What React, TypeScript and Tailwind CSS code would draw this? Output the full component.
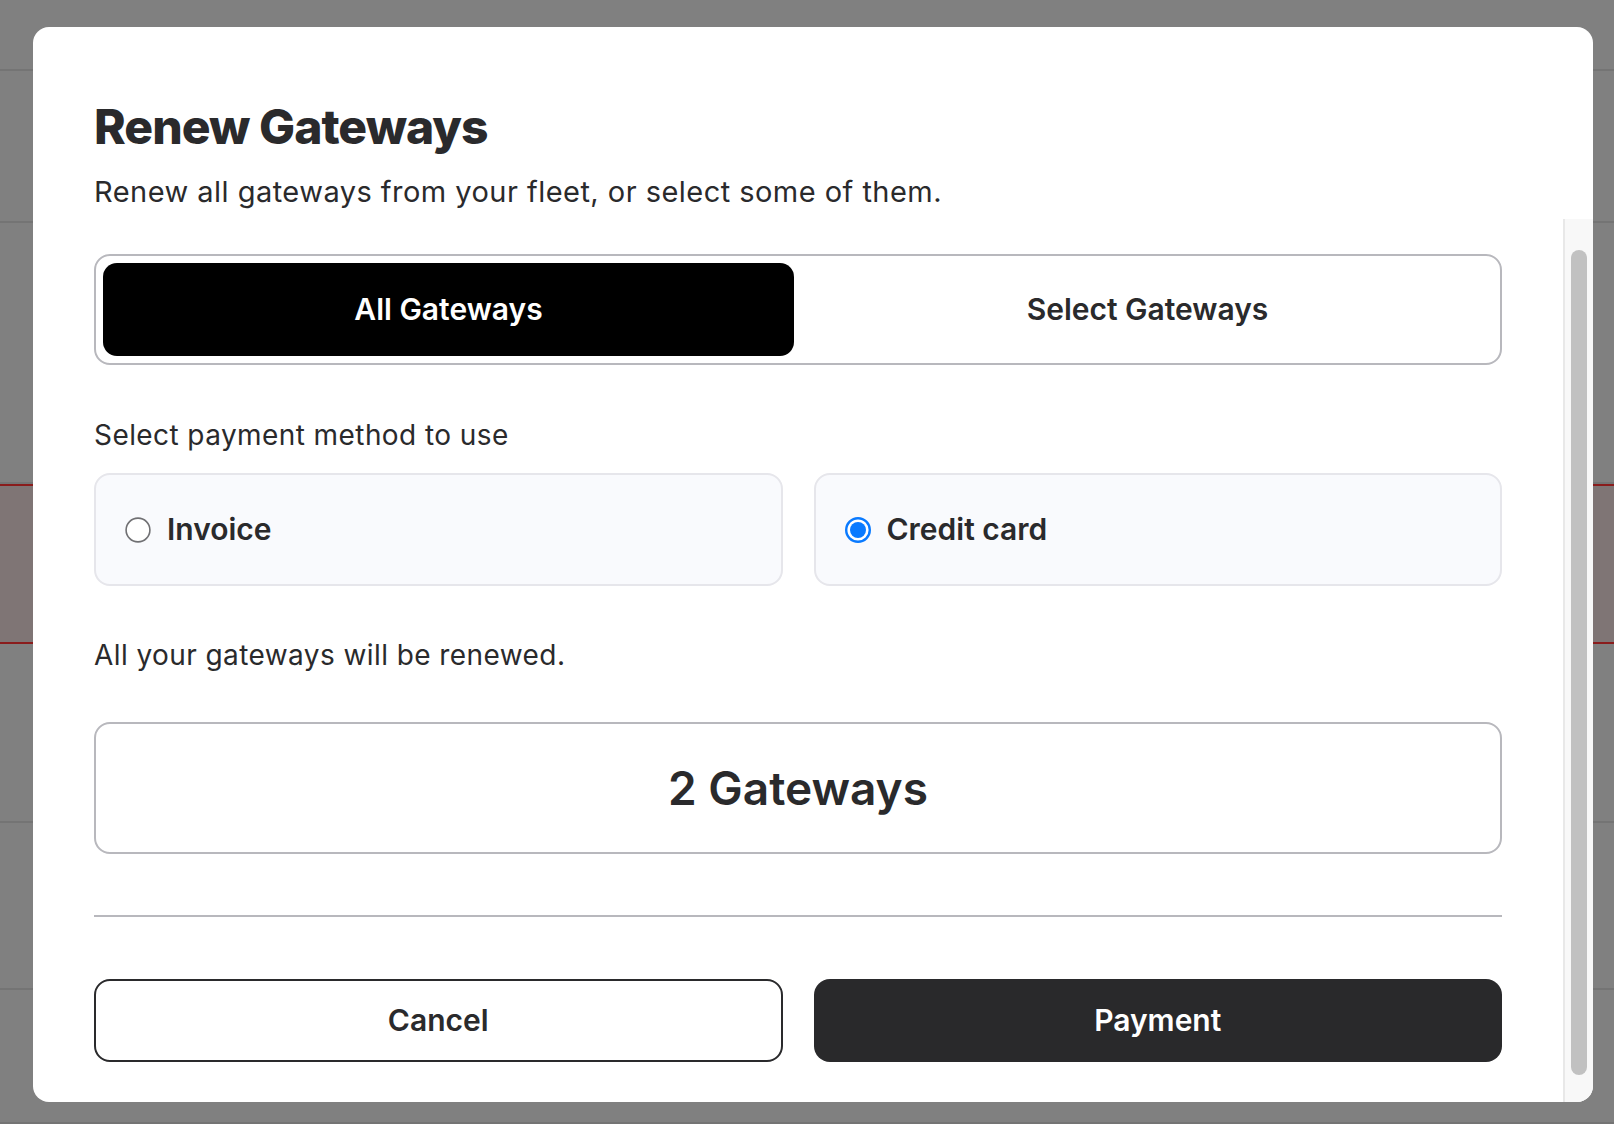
import { useState } from 'react';

const bgRows = [
  { h: 71, tone: 'plain' },
  { h: 152, tone: 'plain' },
  { h: 261, tone: 'plain' },
  { h: 160, tone: 'alert' },
  { h: 179, tone: 'plain' },
  { h: 167, tone: 'plain' },
  { h: 134, tone: 'plain' },
];

function Radio({ checked }: { checked: boolean }) {
  return (
    <svg width="26" height="26" viewBox="0 0 26 26" className="shrink-0">
      {checked ? (
        <>
          <circle cx="13" cy="13" r="11.8" fill="#fff" stroke="#0a7aff" strokeWidth="2.4" />
          <circle cx="13" cy="13" r="8" fill="#0a7aff" />
        </>
      ) : (
        <circle cx="13" cy="13" r="11.9" fill="#fff" stroke="#707073" strokeWidth="1.6" />
      )}
    </svg>
  );
}

export default function App() {
  const [scope, setScope] = useState<'all' | 'select'>('all');
  const [method, setMethod] = useState<'invoice' | 'card'>('card');

  return (
    <div
      className="relative w-full h-[1124px] overflow-hidden bg-[#808080]"
      style={{ fontFamily: 'Inter, "Noto Sans", sans-serif' }}
    >
      {/* page behind the dialog */}
      <div className="flex flex-col">
        {bgRows.map((r, i) => (
          <div
            key={i}
            className={
              r.tone === 'alert'
                ? 'border-b-2 border-t-2 border-[#8a1c1c] bg-[#7f7575] h-[160px]'
                : 'border-b-2 border-[#747474]'
            }
            style={r.tone === 'alert' ? undefined : { height: r.h }}
          />
        ))}
      </div>

      {/* overlay + dialog */}
      <div className="absolute inset-0 flex pl-[33px] pr-[21px] pt-[27px] pb-[22px]">
        <div className="flex-1 flex flex-col bg-white rounded-[16px] overflow-hidden text-[#2a2a2c]">
          {/* header */}
          <div className="px-[61px] pt-[74px] pb-[9px]">
            <h1 className="text-[48px] leading-[52px] font-extrabold tracking-[-0.02em]">Renew Gateways</h1>
            <p className="mt-[21px] text-[29px] leading-[36px] tracking-[0.016em]">
              Renew all gateways from your fleet, or select some of them.
            </p>
          </div>

          {/* body */}
          <div className="flex-1 flex min-h-0">
            <div className="flex-1 px-[61px] pt-[35px] pb-[40px] flex flex-col">
              {/* segmented control */}
              <div className="h-[111px] border-2 border-[#b8b8bd] rounded-[16px] p-[7px] grid grid-cols-2 gap-[8px]">
                <button
                  onClick={() => setScope('all')}
                  className={`rounded-[14px] text-[30px] font-semibold ${
                    scope === 'all' ? 'bg-black text-white' : 'text-[#2a2a2c]'
                  }`}
                >
                  All Gateways
                </button>
                <button
                  onClick={() => setScope('select')}
                  className={`rounded-[14px] text-[30px] font-semibold ${
                    scope === 'select' ? 'bg-black text-white' : 'text-[#2a2a2c]'
                  }`}
                >
                  Select Gateways
                </button>
              </div>

              <p className="mt-[52px] text-[28px] leading-[36px] tracking-[0.015em]">Select payment method to use</p>

              {/* payment methods */}
              <div className="mt-[20px] grid grid-cols-2 gap-[31px]">
                <button
                  onClick={() => setMethod('invoice')}
                  className="h-[113px] flex items-center gap-[16px] pl-[29px] bg-[#f9fafd] border-2 border-[#e6e6eb] rounded-[16px]"
                >
                  <Radio checked={method === 'invoice'} />
                  <span className="text-[30px] font-semibold">Invoice</span>
                </button>
                <button
                  onClick={() => setMethod('card')}
                  className="h-[113px] flex items-center gap-[16px] pl-[29px] bg-[#f9fafd] border-2 border-[#e6e6eb] rounded-[16px]"
                >
                  <Radio checked={method === 'card'} />
                  <span className="text-[30px] font-semibold">Credit card</span>
                </button>
              </div>

              <p className="mt-[51px] text-[28px] leading-[36px] tracking-[0.015em]">All your gateways will be renewed.</p>

              <div className="mt-[49px] h-[132px] border-2 border-[#b8b8bd] rounded-[16px] flex items-center justify-center">
                <span className="text-[46px] font-semibold">2 Gateways</span>
              </div>

              <div className="mt-[61px] h-[2px] bg-[#b8b8bd]" />

              {/* actions */}
              <div className="mt-[62px] grid grid-cols-2 gap-[31px]">
                <button className="h-[83px] border-2 border-[#2a2a2c] rounded-[16px] text-[30px] font-semibold text-[#2a2a2c]">
                  Cancel
                </button>
                <button className="h-[83px] bg-[#29292b] rounded-[16px] text-[30px] font-semibold text-white">
                  Payment
                </button>
              </div>
            </div>

            {/* scrollbar */}
            <div className="w-[30px] shrink-0 bg-[#f8f8f8] border-l-2 border-[#e8e8e8] pl-[6px] pr-[6px] pt-[31px] pb-[27px] flex">
              <div className="w-[16px] flex-1 rounded-full bg-[#c1c1c1]" />
            </div>
          </div>
        </div>
      </div>
    </div>
  );
}
